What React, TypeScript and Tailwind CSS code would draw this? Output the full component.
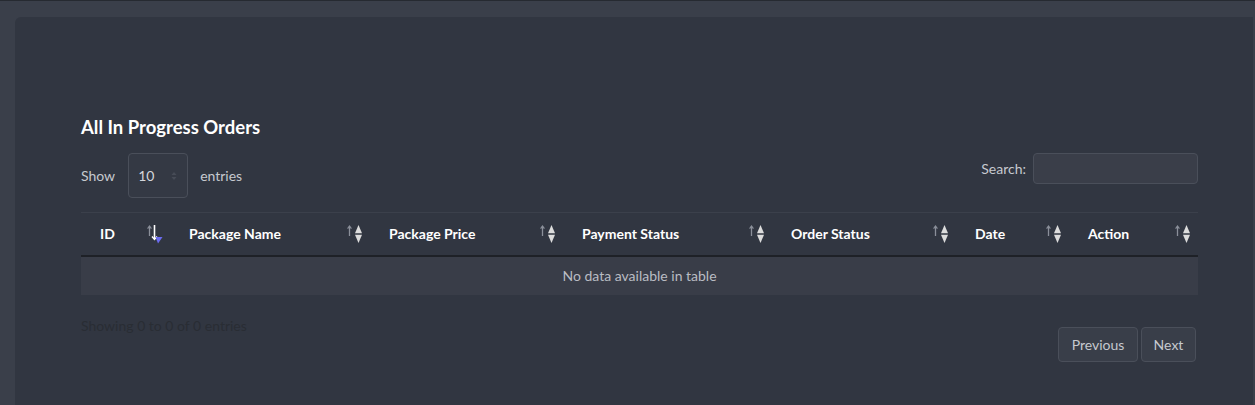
import React from "react";

function SortIcon({ active }: { active?: boolean }) {
  return (
    <svg width="18" height="20" viewBox="0 0 18 20" className="block">
      {/* thin up arrow */}
      <path d="M3.5 12V2.5" stroke="#8b909a" strokeWidth="1.3" />
      <path d="M1.6 4.6L3.5 2L5.4 4.6" stroke="#8b909a" strokeWidth="1.2" fill="none" />
      {active ? (
        <>
          <path d="M8.5 1V15" stroke="#ffffff" strokeWidth="1.6" />
          <path d="M6 12.5L8.5 15.5L11 12.5" stroke="#ffffff" strokeWidth="1.4" fill="none" />
          <path d="M9.5 13L16.5 13L12 19.5Z" fill="#6b6cf0" />
        </>
      ) : (
        <>
          <path d="M9 9.3L12.5 1L16 9.3Z" fill="#dcdcdc" />
          <path d="M9 10.7L12.5 19L16 10.7Z" fill="#dcdcdc" />
        </>
      )}
    </svg>
  );
}

const cols: { label: string; w: string; active?: boolean }[] = [
  { label: "ID", w: "w-[89px]", active: true },
  { label: "Package Name", w: "w-[200px]" },
  { label: "Package Price", w: "w-[193px]" },
  { label: "Payment Status", w: "w-[209px]" },
  { label: "Order Status", w: "w-[184px]" },
  { label: "Date", w: "w-[113px]" },
  { label: "Action", w: "w-[129px]" },
];

export default function App() {
  return (
    <div
      className="w-[1255px] h-[405px] bg-[#3a3f4a] border-t border-[#262a31] pl-[15px] pt-[16px] pr-[2px] overflow-hidden"
      style={{ fontFamily: "Lato, 'Noto Sans', sans-serif" }}
    >
      <div className="h-full bg-[#313641] rounded-tl-[6px] pl-[66px] pr-[55px] pt-[99px]">
        <h2 className="text-[18.5px] font-bold text-white leading-[22px]">All In Progress Orders</h2>
        <div className="flex items-center justify-between mt-[15px] h-[45px]">
          <div className="flex items-center text-[14px] text-[#c6c9cf]">
            <span>Show</span>
            <div className="ml-[13px] w-[60px] h-[45px] rounded-[4px] border border-[#4a4f5a] bg-[#343944] flex items-center pl-[9px] pr-[10px] justify-between">
              <span className="text-[#d4d6db] text-[14px]">10</span>
              <svg width="6" height="10" viewBox="0 0 6 10">
                <path d="M0.5 4L3 1L5.5 4Z" fill="#474c57" />
                <path d="M0.5 6L3 9L5.5 6Z" fill="#474c57" />
              </svg>
            </div>
            <span className="ml-[12px]">entries</span>
          </div>
          <div className="flex items-center text-[14px] text-[#c6c9cf] self-start">
            <span>Search:</span>
            <div className="ml-[7px] w-[165px] h-[31px] rounded-[4px] border border-[#4a4f5a] bg-[#3a3e49]" />
          </div>
        </div>
        <table className="mt-[14px] w-[1117px] border-collapse table-fixed">
          <thead>
            <tr className="border-t border-[#3b404b] border-b-2 border-b-[#1e2127] h-[43px]">
              {cols.map((c) => (
                <th key={c.label} className={`${c.w} p-0 text-left`}>
                  <div className="flex items-center justify-between pl-[19px] pr-[6px]">
                    <span className="text-white text-[14px] font-bold">{c.label}</span>
                    <SortIcon active={c.active} />
                  </div>
                </th>
              ))}
            </tr>
          </thead>
          <tbody>
            <tr className="bg-[#393d48] h-[39px]">
              <td colSpan={7} className="text-center text-[14px] text-[#b9bcc3]">
                No data available in table
              </td>
            </tr>
          </tbody>
        </table>
        <div className="flex justify-between">
          <div className="mt-[20px] text-[14px] text-[#292d34]">Showing 0 to 0 of 0 entries</div>
          <div className="flex gap-[3px] mt-[32px] mr-[2px]">
            <button className="h-[35px] w-[80px] rounded-[4px] border border-[#4a4f5a] bg-[#393e49] text-[14px] text-[#c6c9cf]">
              Previous
            </button>
            <button className="h-[35px] w-[55px] rounded-[4px] border border-[#4a4f5a] bg-[#393e49] text-[14px] text-[#c6c9cf]">
              Next
            </button>
          </div>
        </div>
      </div>
    </div>
  );
}
